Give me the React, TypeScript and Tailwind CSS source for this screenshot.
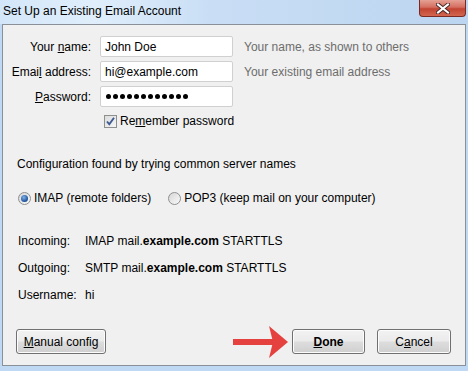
import React from "react";

const font = { fontFamily: '"Liberation Sans", Arial, sans-serif' };

function Checkbox() {
  return (
    <div className="w-[13px] h-[13px] border border-[#8e8f8f] bg-gradient-to-br from-[#dcdcdc] to-[#f6f6f6] flex items-center justify-center">
      <svg width="11" height="11" viewBox="0 0 11 11">
        <path d="M2 5.5 L4.3 8.3 L9 1.8" fill="none" stroke="#3e5a93" strokeWidth="1.9" />
      </svg>
    </div>
  );
}

function Radio({ checked }: { checked?: boolean }) {
  return (
    <div className="w-[13px] h-[13px] rounded-full border border-[#8e8f8f] bg-gradient-to-br from-[#d6d6d6] to-[#fafafa] flex items-center justify-center">
      {checked && (
        <div className="w-[7px] h-[7px] rounded-full bg-[radial-gradient(circle_at_40%_35%,#7fb2ea,#1a4f96_70%)]" />
      )}
    </div>
  );
}

function Btn({ children, bold, w }: { children: React.ReactNode; bold?: boolean; w: string }) {
  return (
    <div
      className={`${w} h-[25px] rounded-[3px] border border-[#707070] flex items-center justify-center text-[12px] text-black bg-[linear-gradient(#f2f2f2_0%,#ebebeb_48%,#dddddd_52%,#cfcfcf_100%)] shadow-[inset_0_0_0_1px_#fcfcfc] ${bold ? "font-bold" : ""}`}
    >
      {children}
    </div>
  );
}

function Arrow() {
  return (
    <svg width="56" height="32" viewBox="0 0 56 32" className="mr-[3px] -my-[4px]">
      <rect x="0" y="13" width="40" height="6" fill="#e4413f" />
      <path d="M36 0 L55 16 L36 32 L40 16 Z" fill="#e4413f" />
    </svg>
  );
}

export default function App() {
  return (
    <div style={font} className="w-[468px] h-[371px] bg-[#bfd8f3] flex flex-col overflow-hidden text-[12px] text-black">
      {/* title bar */}
      <div className="h-[24px] flex items-start justify-between bg-[linear-gradient(90deg,#d3e6f9_0%,#e0eefb_20%,#c9def5_45%,#bcd5f0_100%)]">
        <div className="pl-[3px] pt-[4px] text-[12px] leading-[14px] text-black">Set Up an Existing Email Account</div>
        <div className="mr-[2px] w-[47px] h-[17px] rounded-b-[4px] border border-t-0 border-[#7a2a22] bg-[linear-gradient(#e5a195_0%,#d46e60_45%,#c24433_55%,#d2664f_100%)] flex items-center justify-center">
          <svg width="14" height="11" viewBox="0 0 14 11">
            <path d="M2 1.5 L12 9.5 M12 1.5 L2 9.5" stroke="#4a2a28" strokeWidth="4" strokeLinecap="square" />
            <path d="M2 1.5 L12 9.5 M12 1.5 L2 9.5" stroke="#ffffff" strokeWidth="2" strokeLinecap="square" />
          </svg>
        </div>
      </div>
      {/* body */}
      <div className="mx-[2px] mb-[5px] flex-1 border border-[#8a9097] bg-[#f0f0f0] flex flex-col pt-[11px] pb-[11px]">
        {/* form rows */}
        <div className="flex flex-col gap-[4px]">
          <div className="flex items-center h-[21px]">
            <div className="w-[88px] text-right">Your <span className="underline">n</span>ame:</div>
            <div className="ml-[9px] w-[133px] h-[21px] bg-white border border-[#d0d0d0] rounded-[2px] flex items-center pl-[4px]">John Doe</div>
            <div className="ml-[11px] text-[#6d6d6d]">Your name, as shown to others</div>
          </div>
          <div className="flex items-center h-[21px]">
            <div className="w-[88px] text-right">Emai<span className="underline">l</span> address:</div>
            <div className="ml-[9px] w-[133px] h-[21px] bg-white border border-[#d0d0d0] rounded-[2px] flex items-center pl-[4px]">hi@example.com</div>
            <div className="ml-[11px] text-[#6d6d6d]">Your existing email address</div>
          </div>
          <div className="flex items-center h-[21px]">
            <div className="w-[88px] text-right"><span className="underline">P</span>assword:</div>
            <div className="ml-[9px] w-[133px] h-[21px] bg-white border border-[#d0d0d0] rounded-[2px] flex items-center pl-[5px] gap-[2px]">
              {Array.from({ length: 12 }).map((_, i) => (
                <div key={i} className="w-[5px] h-[5px] rounded-full bg-black" />
              ))}
            </div>
          </div>
        </div>
        <div className="flex items-center mt-[7px] pl-[101px] h-[14px] gap-[3px]">
          <Checkbox />
          <div>Re<span className="underline">m</span>ember password</div>
        </div>
        <div className="mt-[29px] pl-[14px] h-[14px] leading-[14px]">Configuration found by trying common server names</div>
        <div className="mt-[20px] pl-[15px] h-[14px] flex items-center">
          <Radio checked />
          <div className="ml-[3px]">IMAP (remote folders)</div>
          <div className="ml-[17px]"><Radio /></div>
          <div className="ml-[3px]">POP3 (keep mail on your computer)</div>
        </div>
        <div className="mt-[29px] pl-[15px] flex flex-col gap-[13px] leading-[14px]">
          <div className="flex">
            <div className="w-[67px]">Incoming:</div>
            <div>IMAP mail.<b>example.com</b> STARTTLS</div>
          </div>
          <div className="flex">
            <div className="w-[67px]">Outgoing:</div>
            <div>SMTP mail.<b>example.com</b> STARTTLS</div>
          </div>
          <div className="flex">
            <div className="w-[67px]">Username:</div>
            <div>hi</div>
          </div>
        </div>
        <div className="mt-auto flex items-center pl-[13px] pr-[14px]">
          <Btn w="w-[90px]"><span className="underline">M</span>anual config</Btn>
          <div className="flex-1" />
          <Arrow />
          <Btn w="w-[73px]" bold><span className="underline">D</span>one</Btn>
          <div className="ml-[12px]">
            <Btn w="w-[74px]">C<span className="underline">a</span>ncel</Btn>
          </div>
        </div>
      </div>
    </div>
  );
}
